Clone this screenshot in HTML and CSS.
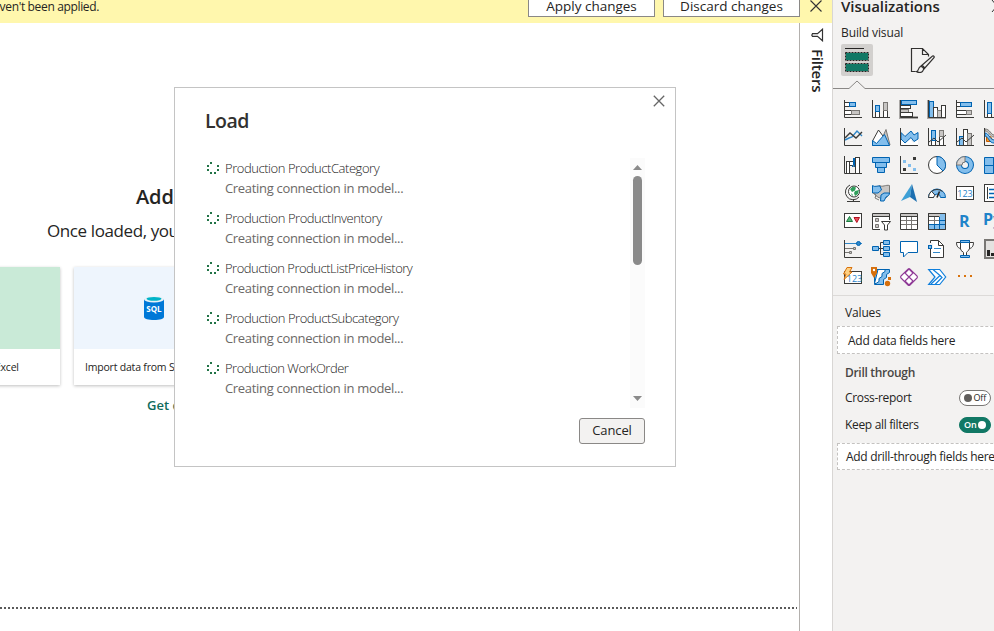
FILE: index.html
```html
<!DOCTYPE html>
<html lang="en">
<head>
<meta charset="utf-8">
<title>Report editor</title>
<link rel="stylesheet" href="styles.css">
</head>
<body>
<div class="app">
  <main class="workspace">
    <header class="notice">
      <span class="notice-text">There are pending changes in your queries that haven't been applied.</span>
      <div class="notice-actions">
        <button class="notice-btn apply"><span>Apply changes</span></button>
        <button class="notice-btn discard"><span>Discard changes</span></button>
        <svg class="notice-close" width="12" height="12" viewBox="0 0 12 12"><path d="M.5.5l11 11M11.5.5l-11 11" fill="none" stroke="#333" stroke-width="1.1"/></svg>
      </div>
    </header>
    <div class="stage">
      <section class="canvas">
        <h1 class="start-title">Add data</h1>
        <p class="start-sub">Once loaded, your</p>
        <div class="cards">
          <article class="card"><div class="card-art green"></div><div class="card-label">Import data from Excel</div></article>
          <article class="card"><div class="card-art blue">
            <svg width="20" height="24" viewBox="0 0 20 24"><path d="M0 3v18c0 1.700 4.500 3 10 3s10-1.300 10-3V3z" fill="#0078d7"/><ellipse cx="10" cy="3.200" rx="10" ry="3.200" fill="#e8f2f8"/><ellipse cx="10" cy="2.800" rx="7.500" ry="1.900" fill="#00b3c8"/><text x="10" y="16" class="sql">SQL</text></svg>
          </div><div class="card-label">Import data from SQL</div></article>
        </div>
        <a class="start-link">Get data</a>
        <div class="page-edge"></div>
      </section>
      <aside class="filters">
        <svg width="13" height="14" viewBox="0 0 13 14"><path d="M11.500 1.200v11.600L6.500 8.400H1.500L.8 7.200 1.500 5.600h5z" fill="none" stroke="#333" stroke-width="1.200"/></svg>
        <span>Filters</span>
      </aside>
    </div>
  </main>

  <aside class="panel">
    <div class="panel-title"><span>Visualizations</span><svg width="8" height="12" viewBox="0 0 8 12"><path d="M1 0l5 6-5 6" fill="none" stroke="#333"/></svg></div>
    <div class="panel-sub">Build visual</div>
    <div class="tabs">
      <div class="tab active"><svg width="26" height="26" viewBox="0 0 26 26"><path d="M1 1.500h19" stroke="#252423"/><path fill="#117865" d="M2 6h22v7H2zM2 17h22v7H2z"/><g fill="none" stroke="#252423" stroke-dasharray="2 1"><rect x="1.500" y="5.500" width="23" height="8"/><rect x="1.500" y="16.500" width="23" height="8"/></g></svg></div>
      <div class="tab"><svg class="brush" width="26" height="26" viewBox="0 0 26 26"><path d="M5.500 24.500H1.500v-23h11l6 6v2M12.500 1.500v6h6M10 25.500c-2 0-3-.5-3.500-1 2.500-.5 1.500-4 4-5 2 0 3.500 1.500 3 3.200-.5 1.800-1.800 2.800-3.500 2.800zM10.500 19.500L22.500 9c1.500-.5 2 .8 1.500 1.700L13.500 22.500M12 18l2.800 2.800" fill="none" stroke="#323130" stroke-width="1.200"/></svg></div>
    </div>
    <svg class="tab-line" width="162" height="10" viewBox="0 0 162 10"><path d="M0 8.500H16L24 1l8 7.500H162" fill="none" stroke="#8a8886"/></svg>
    <div class="visuals">
      <!-- bar and column charts -->
      <svg class="vi"><rect class="w g" x=".5" y="2.500" width="5" height="4"/><rect class="b" x="5.500" y="2.500" width="6" height="4"/><rect class="w g" x=".5" y="10.500" width="7" height="4"/><rect class="s" x="7.500" y="10.500" width="8" height="4"/><path class="k" d="M.5 0v17.500H18"/></svg>
      <svg class="vi"><rect class="w d" x="3.500" y="11.500" width="4" height="6"/><rect class="b" x="3.500" y="5.500" width="4" height="6"/><rect class="w d" x="11.500" y="10.500" width="4" height="7"/><rect class="s" x="11.500" y="2.500" width="4" height="8"/><path class="k" d="M.5 0v17.500H18"/></svg>
      <svg class="vi"><path class="halo" d="M.5 0v17.500H18"/><rect class="w g" x=".5" y="5.500" width="10" height="3"/><rect class="s" x=".5" y="9.500" width="8" height="3"/><rect class="w g" x=".5" y="12.500" width="12" height="4"/><rect class="b" x="1.500" y=".5" width="15" height="4"/><path class="k" d="M.5 0v17.500H18"/></svg>
      <svg class="vi"><path class="halo" d="M.5 0v17.500H18"/><rect class="b" x="1.500" y="1.500" width="4" height="16"/><rect class="w d" x="5.500" y="7.500" width="4" height="10"/><rect class="s" x="9.500" y="10.500" width="4" height="7"/><rect class="w d" x="13.500" y="5.500" width="4" height="12"/><path class="k" d="M.5 0v17.500H18"/></svg>
      <svg class="vi"><rect class="w g" x=".5" y="2.500" width="4" height="4"/><rect class="b" x="4.500" y="2.500" width="11" height="4"/><rect class="w g" x=".5" y="10.500" width="10" height="4"/><rect class="s" x="10.500" y="10.500" width="5" height="4"/><path class="k" d="M.5 0v17.500H18"/></svg>
      <svg class="vi"><rect class="w d" x="3.500" y="13.500" width="4" height="4"/><rect class="b" x="3.500" y="2.500" width="4" height="11"/><rect class="s" x="11.500" y="2.500" width="4" height="8"/><path class="k" d="M.5 0v17.500H18"/></svg>
      <!-- line, area and combo charts -->
      <svg class="vi"><path class="k2 blue-line" d="M1 12l4-2 3-1 5-6 5 5"/><path class="k2" d="M1 10l5-5 6 5 6-6"/><path class="k" d="M.5 0v17.500H18"/></svg>
      <svg class="vi"><path class="s" d="M7 17l7-15.500 4 15.500z"/><path class="w d" d="M.5 13L6.500 2l6 8-6 7.500h-6z"/><path class="b" d="M.5 12.500l4 3 8-9 5 11H.5z"/></svg>
      <svg class="vi"><path class="w" stroke="none" d="M1 12l4 3 5-4 3 4 5-3v5H1z"/><path class="b" d="M1 4.500l4 4 6-5.500 3 4 4-2.500V11l-4 2.500-3-4-6 5.500-4-4z"/><path class="k" d="M.5 0v17.500H18"/></svg>
      <svg class="vi"><rect class="w d" x="3.500" y="11.500" width="4" height="6"/><rect class="b" x="3.500" y="2.500" width="4" height="10"/><rect class="w d" x="11.500" y="8.500" width="4" height="9"/><rect class="s" x="11.500" y="2.500" width="4" height="6"/><path class="k" d="M1 14l5-4 4 4 8-7"/><path class="k" d="M.5 0v17.500H18"/></svg>
      <svg class="vi"><rect class="b" x="3.500" y="8.500" width="4" height="9"/><rect class="w d" x="7.500" y="1.500" width="4" height="16"/><rect class="s" x="11.500" y="5.500" width="4" height="12"/><path class="k" d="M1 14l5-4 4 4 8-7"/><path class="k" d="M.5 0v17.500H18"/></svg>
      <svg class="vi"><path class="s" d="M1 3c4 0 5 6 9 6h8V7h-8C7 7 6 1 1 1z"/><path fill="#f2932b" stroke="#c55c00" d="M2.500 8.500h4l3 5h-7z"/><path class="b" d="M1 5c4 0 4 6 9 7h8v3h-8c-5 0-5-6-9-7z"/><path class="k" d="M.5 0v17.500H18"/></svg>
      <!-- proportion and relation charts -->
      <svg class="vi"><rect class="w d" x="2.500" y="5.500" width="3" height="12"/><rect class="w d" x="5.500" y="5.500" width="4" height="4"/><path d="M8 10h2V2" fill="none" stroke="#0063b1" stroke-width="2"/><path class="s" d="M9.500 9v2"/><rect class="w d" x="11.500" y="1.500" width="4" height="16"/><path class="k" d="M.5 0v17.500H18"/></svg>
      <svg class="vi"><path class="b" d="M.5 1.500h17v5H.5zM3.500 6.500h11v5h-11zM5.500 11.500h7v5h-7z"/></svg>
      <svg class="vi"><path class="k" d="M.5 0v17.500H18"/><path fill="#83beec" d="M3 4h3v3H3zM8 8h3v3H8zM13 12h3v3h-3z"/><path fill="#3a3a38" d="M13 1h3v3h-3zM3 12h3v3H3z"/></svg>
      <svg class="vi"><circle class="w d" cx="9" cy="9" r="8.500"/><path class="b" d="M9 9V.5A8.500 8.500 0 0 1 15 15z"/></svg>
      <svg class="vi"><circle cx="9" cy="9" r="6" fill="none" stroke="#0063b1" stroke-width="6"/><circle cx="9" cy="9" r="6" fill="none" stroke="#83beec" stroke-width="4"/><path d="M9 .5A8.500 8.500 0 0 0 .5 9H6a3 3 0 0 1 3-3z" fill="#d8d6d4" stroke="#797774"/></svg>
      <svg class="vi"><path class="b" d="M.5 1.500h9v8h-9zM.5 9.500h9v8h-9zM9.500 1.500h8v5h-8zM9.500 6.500h8v11h-8z"/></svg>
      <!-- maps, gauge and cards -->
      <svg class="vi"><circle class="w d" cx="10" cy="7.500" r="5.500"/><path fill="#2f9e5b" d="M6 5l3-2.500 3 1-1 3-3 1.500zM11 7l4-1-1 4-3 2-1-3zM7 9l2 2-1 1z"/><path class="k" d="M6 1A7.700 7.700 0 1 0 15 13M9.500 15v2M3 17.500h13M14 2l1-1"/></svg>
      <svg class="vi"><path class="s" d="M8 1.500c2 2 6-1 9.500 0v8l-3 4-4 1.500-5-2-5-5v-3z"/><path class="b" d="M.5 1.500c2 2 5 0 7.500.5L9.500 6 6 9H.5zM9 11l3-2h5.500c0 2-1.500 3-3.500 4l-2 4H8.500z"/><path d="M1 9l3 2-1 3 4 2" fill="none" stroke="#797774"/></svg>
      <svg class="vi"><path fill="#3ea0d6" d="M12 0L1 17l9-4z"/><path fill="#1c6fb0" d="M12 0l5 18-7-5z"/></svg>
      <svg class="vi"><path class="b" d="M.5 13.500a8.500 8.500 0 0 1 17 0h-5a3.500 3.500 0 0 0-7 0z"/><path class="w d" d="M.5 13.500a8.500 8.500 0 0 1 3-6.300l3.500 4a3.500 3.500 0 0 0-1.500 2.300z"/><path d="M9 13.500l2.500-6" stroke="#252423" stroke-width="1.600"/><path class="k" d="M3.500 7.500a8.500 8.500 0 0 1 11 0"/></svg>
      <svg class="vi"><rect class="w k0" x=".5" y="2.500" width="17" height="13"/><text class="num" x="9" y="12.500">123</text></svg>
      <svg class="vi"><rect class="w k0" x=".5" y=".5" width="17" height="17"/><path class="k" d="M3.500 3v12"/><path d="M5 5.500h10M5 9.500h10M5 13.500h10" stroke="#0063b1" stroke-width="1.600"/></svg>
      <!-- indicators, slicer, tables and scripts -->
      <svg class="vi"><rect class="w k0" x=".5" y="1.500" width="17" height="14"/><path fill="#5fb87a" stroke="#197a3e" d="M2.500 9.500h6l-3-5z"/><path fill="#e8505b" stroke="#b01020" d="M10 5.500h5.500l-2.700 5z"/></svg>
      <svg class="vi"><path fill="#fff" d="M.5 1.500h17v16H.5z"/><path class="k" d="M8 17.500H.5v-16h17V8"/><path fill="#c8c6c4" d="M1 2h16v2H1z"/><path class="k" d="M0 4.500h18"/><path class="s" d="M3.500 6.500h3v3h-3zM3.500 12.500h3v3h-3z"/><path class="w k0" d="M9.500 9.500h9L15.500 13v5h-3v-5z"/></svg>
      <svg class="vi"><path class="w k0" d="M.5 1.500h17v16H.5z"/><path fill="#c8c6c4" d="M1 2h16v2H1z"/><path d="M1 8.500h16M1 12.500h16M6.500 5v12M11.500 5v12" stroke="#797774"/><path class="k" d="M.5 4.500h17"/></svg>
      <svg class="vi"><path class="w k0" d="M.5 1.500h17v16H.5z"/><path fill="#83beec" d="M12 2h5v15H1v-4h11z"/><path fill="#c8c6c4" d="M1 2h11v2H1z"/><path d="M1 8.500h11M6.500 5v8" stroke="#797774"/><path d="M12 8.500h5M1 12.500h16M6.500 13v4M11.500 5v12" stroke="#0063b1"/><path class="k" d="M.5 4.500h11M.5 1.500h17v16H.5z"/></svg>
      <svg class="vi"><text class="code" x="3" y="15">R</text></svg>
      <svg class="vi"><text class="code" x="-1" y="13">Py</text></svg>
      <!-- AI visuals -->
      <svg class="vi"><path d="M1 8.500h8M1 12.500h4" stroke="#797774"/><path d="M1 3.500h17" stroke="#2f87c8"/><circle cx="14.500" cy="3.500" r="2" fill="#2f87c8" stroke="#0063b1"/><path class="s" d="M9.500 7.500h2v2h-2zM5.500 11.500h2v2h-2z"/><path class="k" d="M.5 0v17.500H18"/></svg>
      <svg class="vi"><path class="k" d="M6 8.500h6M8.500 2.500v12M8.500 2.500H12M8.500 14.500H12"/><path class="b" d="M.5 6.500h6v4h-6zM11.500.5h6v4h-6zM11.500 6.500h6v4h-6zM11.500 12.500h6v4h-6z"/></svg>
      <svg class="vi"><path d="M.5 1.500h17v11H8L3.500 17v-4.500h-3z" fill="#fff" stroke="#0063b1"/></svg>
      <svg class="vi"><path class="w k0" d="M2.500.5h8l5 5v12h-13z"/><path class="k" d="M10.500.5v5h5"/><path stroke="#2f87c8" d="M6 8.500h7M5 12.500h7"/><path d="M0 3h5v6H0z" fill="#f3f2f1"/><rect class="b" x=".5" y="5.500" width="3" height="3"/></svg>
      <svg class="vi"><path class="w k0" d="M4.500 2.500h-4c0 4 2 6 4.500 6M13.500 2.500h4c0 4-2 6-4.500 6M4.500.5h9v8c-1 3-3 3-3 4v3h-3v-3c0-1-3-1-3-4z"/><path class="b" d="M4.500.5h9v2h-9zM4.500 15.500h9v2h-9z"/></svg>
      <svg class="vi"><path d="M1 0h17v18H1z" fill="#e4e2e0" stroke="#797774" stroke-width="2"/><path fill="#252423" d="M3 10h3v6H3zM7 13h3v3H7zM11 14h4v2h-4z"/></svg>
      <!-- add-on visuals -->
      <svg class="vi"><rect class="w k0" x=".5" y="3.500" width="17" height="12"/><text class="num" x="10.500" y="13.500">123</text><path fill="#fdd083" stroke="#d9730d" d="M3 -.5h5L5.500 4H8l-8 7.500L2 6H-.5z"/></svg>
      <svg class="vi"><g transform="translate(0 -1)"><path class="b" d="M2.500 2.500h15v3l-3 2v3l-3 2v5h-9z"/><path class="w" stroke="#0063b1" d="M6 2.500h7v2l-3 2v3l-3 2v3l-3 2H2.500z"/><path fill="#d66f0c" d="M-1 0h6v6L2 11l-3-5z"/><circle cx="2" cy="3" r="1.200" fill="#fff"/><circle cx="15.500" cy="16.500" r="2.700" fill="#d66f0c"/><path fill="#d66f0c" d="M16 10h3v3h-3z"/></g></svg>
      <svg class="vi"><path fill="#fff" stroke="#8f3a96" stroke-width="1.100" d="M8 1.200Q9 .2 10 1.200L17 8q1 1 0 2l-7 7q-1 1-2 0L1 10Q0 9 1 8zM5 5l8 8M13 5l-8 8M9 1l4 4-4 4-4-4zM9 9l4 4-4 4-4-4z"/></svg>
      <svg class="vi"><path d="M.7 1.500h11l6 7.500-6 7.500H.7L7 9z" fill="#fff" stroke="#0f7fdc" stroke-width="1.200"/><path d="M5 1.500l7 6-9 8.500M12 7.500l2 2-7 7" fill="none" stroke="#0f7fdc" stroke-width="1.200"/></svg>
      <svg class="vi"><path fill="#d9730d" d="M2 7h2v2H2zM8 7h2v2H8zM14 7h2v2h-2z"/></svg>
    </div>
    <div class="wells">
      <div class="well-title">Values</div>
      <div class="drop values">Add data fields here</div>
      <div class="well-title strong">Drill through</div>
      <div class="setting"><span>Cross-report</span><div class="toggle off"><i></i><b>Off</b></div></div>
      <div class="setting"><span>Keep all filters</span><div class="toggle on"><b>On</b><i></i></div></div>
      <div class="drop drill">Add drill-through fields here</div>
    </div>
  </aside>

  <section class="dialog">
    <svg class="dialog-close" width="12" height="12" viewBox="0 0 12 12"><path d="M.8.8l10.400 10.400M11.200.8L.8 11.200" fill="none" stroke="#666" stroke-width="1.300"/></svg>
    <h2>Load</h2>
    <div class="dialog-body">
      <ul class="jobs">
        <li><svg class="spin" viewBox="0 0 12 12"><path d="M3 0h2v2H3zM0 3h2v2H0zM0 7h2v2H0zM3 10h2v2H3zM7 10h2v2H7zM10 7h2v2h-2zM10 3h2v2h-2z"/></svg><div><p class="name">Production ProductCategory</p><p class="state">Creating connection in model...</p></div></li>
        <li><svg class="spin" viewBox="0 0 12 12"><path d="M3 0h2v2H3zM0 3h2v2H0zM0 7h2v2H0zM3 10h2v2H3zM7 10h2v2H7zM10 7h2v2h-2zM10 3h2v2h-2z"/></svg><div><p class="name">Production ProductInventory</p><p class="state">Creating connection in model...</p></div></li>
        <li><svg class="spin" viewBox="0 0 12 12"><path d="M3 0h2v2H3zM0 3h2v2H0zM0 7h2v2H0zM3 10h2v2H3zM7 10h2v2H7zM10 7h2v2h-2zM10 3h2v2h-2z"/></svg><div><p class="name tight">Production ProductListPriceHistory</p><p class="state">Creating connection in model...</p></div></li>
        <li><svg class="spin" viewBox="0 0 12 12"><path d="M3 0h2v2H3zM0 3h2v2H0zM0 7h2v2H0zM3 10h2v2H3zM7 10h2v2H7zM10 7h2v2h-2zM10 3h2v2h-2z"/></svg><div><p class="name">Production ProductSubcategory</p><p class="state">Creating connection in model...</p></div></li>
        <li><svg class="spin" viewBox="0 0 12 12"><path d="M3 0h2v2H3zM0 3h2v2H0zM0 7h2v2H0zM3 10h2v2H3zM7 10h2v2H7zM10 7h2v2h-2zM10 3h2v2h-2z"/></svg><div><p class="name tight">Production WorkOrder</p><p class="state">Creating connection in model...</p></div></li>
      </ul>
      <div class="scroll">
        <svg width="9" height="5" viewBox="0 0 9 5"><path d="M4.500 0L9 5H0z" fill="#8a8a8a"/></svg>
        <div class="thumb"></div>
        <svg width="9" height="5" viewBox="0 0 9 5"><path d="M4.500 5L9 0H0z" fill="#8a8a8a"/></svg>
      </div>
    </div>
    <div class="dialog-foot"><button class="cancel">Cancel</button></div>
  </section>
</div>
</body>
</html>
```
FILE: styles.css
```css
* { box-sizing: border-box; }
body, h1, h2, p, ul { margin: 0; padding: 0; }
body {
  width: 994px; height: 631px; overflow: hidden; background: #fff;
  font-family: "Open Sans", "Noto Sans", sans-serif; font-size: 12px; color: #252423;
}
svg { display: block; flex: none; }
button { font-family: inherit; padding: 0; margin: 0; color: inherit; }
.app { position: relative; display: flex; width: 994px; height: 631px; overflow: hidden; white-space: nowrap; }

.workspace { width: 832px; flex: none; display: flex; flex-direction: column; }
.notice { height: 23px; background: #fff7ad; display: flex; justify-content: space-between; overflow: hidden; }
.notice-text { width: 99px; display: flex; justify-content: flex-end; line-height: 13px; font-size: 12px; letter-spacing: -0.35px; }
.notice-actions { display: flex; align-items: flex-start; padding-right: 10px; }
.notice-btn { height: 25px; margin-top: -8px; border: 1px solid #8a8886; background: #fff; font-size: 13.500px; font-weight: 500; line-height: 26px; letter-spacing: 0; }
.notice-btn.apply { width: 127px; margin-right: 8px; }
.notice-btn.discard { width: 137px; margin-right: 10px; }
.stage { display: flex; flex: 1; }
.canvas { width: 800px; border-right: 1px solid #b3b0ad; padding-top: 160px; display: flex; flex-direction: column; overflow: hidden; }
.start-title { font-size: 20px; line-height: 27px; font-weight: 600; letter-spacing: -0.1px; margin-left: 136px; }
.start-sub { font-size: 17px; line-height: 24px; margin: 9px 0 0 47px; letter-spacing: -0.4px; }
.cards { display: flex; gap: 14px; margin: 24px 0 0 -100px; }
.card { width: 160px; height: 118px; background: #fff; box-shadow: 0 1px 3px rgba(0,0,0,.25); flex: none; }
.card-art { height: 82px; display: flex; align-items: center; justify-content: center; }
.green { background: #c9ead7; }
.blue { background: #eef5fd; }
.card-label { padding-left: 11px; font-size: 10.500px; line-height: 37px; font-weight: 500; letter-spacing: -0.2px; }
.sql { font-size: 8px; font-weight: 700; fill: #fff; text-anchor: middle; }
.start-link { color: #0f6b5c; font-size: 13px; font-weight: 600; line-height: 20px; margin: 10px 0 0 147px; }
.page-edge { height: 2px; margin: auto 2px 22px 0; background: repeating-linear-gradient(90deg, #5a5a5a 0 2px, transparent 2px 4px); }
.filters { flex: 1; display: flex; flex-direction: column; align-items: center; padding: 5px 0 0 3px; gap: 7px; }
.filters span { writing-mode: vertical-rl; font-size: 15px; line-height: 18px; font-weight: 600; letter-spacing: -0.2px; }

.panel { width: 162px; flex: none; background: #f3f2f1; border-left: 1px solid #d8d6d4; overflow: hidden; }
.panel-title { display: flex; height: 20px; padding-left: 8px; font-size: 15px; font-weight: 600; line-height: 13px; letter-spacing: -0.05px; }
.panel-title svg { margin-left: 51px; }
.panel-sub { height: 24px; padding-left: 8px; font-size: 12px; line-height: 26px; font-weight: 500; letter-spacing: -0.1px; }
.tabs { display: flex; gap: 34px; padding-left: 8px; }
.tab { width: 32px; height: 32px; display: flex; align-items: center; justify-content: center; border-radius: 2px; }
.tab.active { background: #d2d0ce; }
.tab-line { margin-top: 4px; }
.visuals { display: grid; grid-template-columns: repeat(6, 18px); grid-auto-rows: 18px; gap: 10px; width: 158px; padding: 10px 0 9px 11px; height: 205px; }
.vi { width: 18px; height: 18px; overflow: visible; }
.w { fill: #fff; }
.b { fill: #83beec; stroke: #0063b1; }
.s { fill: #c8c6c4; stroke: #797774; }
.g, .d, .k0 { stroke: #3a3a38; }
.k { fill: none; stroke: #3a3a38; }
.k2 { fill: none; stroke: #3a3a38; stroke-width: 1.400; }
.blue-line { stroke: #2f87c8; }
.halo { fill: none; stroke: #aaa8a6; stroke-width: 3; }
.num { font-size: 9px; fill: #1f83c9; text-anchor: middle; }
.code { font-size: 16px; font-weight: 700; fill: #1f83c9; }

.wells { border-top: 1px solid #dcdad8; padding-top: 7px; height: 400px; }
.well-title { padding-left: 12px; height: 23px; line-height: 20px; letter-spacing: -0.15px; }
.drop { margin-left: 4px; width: 176px; height: 28px; border: 1px dashed #c4c2c0; background: #fff; padding-left: 10px; line-height: 27px; letter-spacing: -0.25px; }
.drill { padding-left: 8px; margin-top: 5px; height: 27px; line-height: 26px; letter-spacing: -0.3px; }
.strong { font-weight: 600; color: #484644; height: 30px; line-height: 37px; letter-spacing: -0.3px; }
.setting { display: flex; width: 158px; height: 27px; padding-left: 12px; align-items: center; justify-content: space-between; letter-spacing: -0.33px; }
.toggle { display: flex; align-items: center; justify-content: space-between; width: 32px; height: 16px; border: 1px solid #797775; border-radius: 8px; background: #fff; padding: 0 4px; font-size: 9px; letter-spacing: -0.2px; }
.toggle b { font-weight: 400; }
.toggle i { width: 8px; height: 8px; border-radius: 4px; background: #605e5c; }
.toggle.on { background: #117865; border-color: #117865; color: #fff; }
.toggle.on b { font-weight: 600; }
.toggle.on i { background: #fff; }

.dialog { position: absolute; left: 174px; top: 87px; width: 502px; height: 380px; border: 1px solid #c4c4c4; background: #fff; padding: 20px 30px 0; }
.dialog-close { position: absolute; right: 10px; top: 7px; }
.dialog h2 { font-size: 19.500px; line-height: 26px; font-weight: 600; letter-spacing: -0.5px; color: #323130; }
.dialog-body { display: flex; justify-content: space-between; height: 250px; margin-top: 24px; }
.jobs { list-style: none; }
.jobs li { display: flex; height: 50px; gap: 6px; padding-left: 2px; }
.spin { width: 12px; height: 12px; fill: #217346; margin-top: 4px; }
.name, .state { font-size: 13px; line-height: 20px; }
.name { font-weight: 300; letter-spacing: -0.45px; }
.name.tight { letter-spacing: -0.5px; }
.state { color: #6b6967; letter-spacing: -0.32px; }
.scroll { width: 15px; background: #fbfbfb; display: flex; flex-direction: column; align-items: center; padding: 7px 0; }
.scroll svg:last-child { margin-top: auto; }
.thumb { width: 9px; height: 89px; border-radius: 5px; background: #8a8a8a; margin-top: 6px; }
.dialog-foot { display: flex; justify-content: flex-end; margin-top: 10px; }
.cancel { width: 66px; height: 26px; border: 1px solid #8a8886; border-radius: 3px; background: #f3f2f1; font-size: 13px; font-weight: 500; line-height: 22px; padding-bottom: 2px; letter-spacing: -0.1px; }
```
